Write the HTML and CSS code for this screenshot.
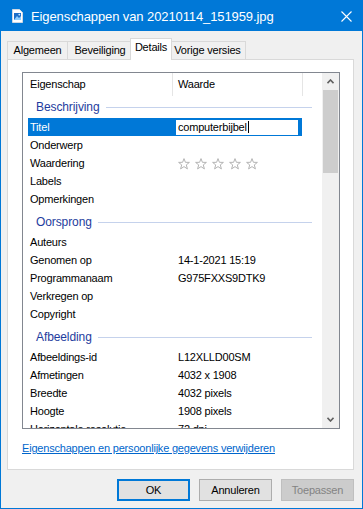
FILE: index.html
```html
<!DOCTYPE html>
<html lang="nl">
<head>
    <meta charset="UTF-8">
    <title>Eigenschappen van 20210114_151959.jpg</title>
    <link rel="stylesheet" href="styles.css">
</head>
<body>
<div class="window">
    <!-- Title bar -->
    <div class="titlebar">
        <svg class="app-icon" viewBox="0 0 11 14">
            <path d="M0.5 0.5 H7.5 L10.5 3.5 V13.5 H0.5 Z" fill="#fff" stroke="#cfd8e3"/>
            <rect x="2" y="4" width="7" height="7" fill="#1e6fc8"/>
            <path d="M2 11 L5 7 L7 9 L9 7 V11 Z" fill="#8fd0ff"/>
            <circle cx="7.3" cy="5.6" r="0.9" fill="#cfeaff"/>
        </svg>
        <span class="title">Eigenschappen van 20210114_151959.jpg</span>
        <svg class="close" viewBox="0 0 11 11">
            <path d="M0.5 0.5 L10.5 10.5 M10.5 0.5 L0.5 10.5" stroke="#fff" stroke-width="1.1"/>
        </svg>
    </div>

    <div class="client">
        <!-- Tabs -->
        <ul class="tabs">
            <li class="tab tab-general">Algemeen</li>
            <li class="tab tab-security">Beveiliging</li>
            <li class="tab tab-details active">Details</li>
            <li class="tab tab-versions">Vorige versies</li>
        </ul>

        <div class="panel">
            <div class="listview">
                <div class="list">
                    <div class="list-header">
                        <div class="col col-name">Eigenschap</div>
                        <div class="col col-value">Waarde</div>
                    </div>

                    <div class="group first"><span>Beschrijving</span><i class="rule"></i></div>
                    <div class="row selected">
                        <span class="name">Titel</span>
                        <span class="value"><span class="edit">computerbijbel<b class="caret"></b></span></span>
                    </div>
                    <div class="row"><span class="name">Onderwerp</span><span class="value"></span></div>
                    <div class="row">
                        <span class="name">Waardering</span>
                        <span class="value stars">
                            <svg viewBox="0 0 12 12"><polygon points="6,0.6 7.4,4.3 11.4,4.4 8.3,6.9 9.4,10.9 6,8.6 2.6,10.9 3.7,6.9 0.6,4.4 4.6,4.3"/></svg>
                            <svg viewBox="0 0 12 12"><polygon points="6,0.6 7.4,4.3 11.4,4.4 8.3,6.9 9.4,10.9 6,8.6 2.6,10.9 3.7,6.9 0.6,4.4 4.6,4.3"/></svg>
                            <svg viewBox="0 0 12 12"><polygon points="6,0.6 7.4,4.3 11.4,4.4 8.3,6.9 9.4,10.9 6,8.6 2.6,10.9 3.7,6.9 0.6,4.4 4.6,4.3"/></svg>
                            <svg viewBox="0 0 12 12"><polygon points="6,0.6 7.4,4.3 11.4,4.4 8.3,6.9 9.4,10.9 6,8.6 2.6,10.9 3.7,6.9 0.6,4.4 4.6,4.3"/></svg>
                            <svg viewBox="0 0 12 12"><polygon points="6,0.6 7.4,4.3 11.4,4.4 8.3,6.9 9.4,10.9 6,8.6 2.6,10.9 3.7,6.9 0.6,4.4 4.6,4.3"/></svg>
                        </span>
                    </div>
                    <div class="row"><span class="name">Labels</span><span class="value"></span></div>
                    <div class="row"><span class="name">Opmerkingen</span><span class="value"></span></div>

                    <div class="group"><span>Oorsprong</span><i class="rule"></i></div>
                    <div class="row"><span class="name">Auteurs</span><span class="value"></span></div>
                    <div class="row"><span class="name">Genomen op</span><span class="value">14-1-2021 15:19</span></div>
                    <div class="row"><span class="name">Programmanaam</span><span class="value">G975FXXS9DTK9</span></div>
                    <div class="row"><span class="name">Verkregen op</span><span class="value"></span></div>
                    <div class="row"><span class="name">Copyright</span><span class="value"></span></div>

                    <div class="group"><span>Afbeelding</span><i class="rule"></i></div>
                    <div class="row"><span class="name">Afbeeldings-id</span><span class="value">L12XLLD00SM</span></div>
                    <div class="row"><span class="name">Afmetingen</span><span class="value">4032 x 1908</span></div>
                    <div class="row"><span class="name">Breedte</span><span class="value">4032 pixels</span></div>
                    <div class="row"><span class="name">Hoogte</span><span class="value">1908 pixels</span></div>
                    <div class="row"><span class="name">Horizontale resolutie</span><span class="value">72 dpi</span></div>
                </div>

                <!-- Scrollbar -->
                <div class="scrollbar">
                    <div class="arrow">
                        <svg viewBox="0 0 7 5"><path d="M0.5 4.2 L3.5 1 L6.5 4.2" fill="none" stroke="#606060" stroke-width="1.6"/></svg>
                    </div>
                    <div class="thumb"></div>
                    <div class="track"></div>
                    <div class="arrow">
                        <svg viewBox="0 0 7 5"><path d="M0.5 0.8 L3.5 4 L6.5 0.8" fill="none" stroke="#606060" stroke-width="1.6"/></svg>
                    </div>
                </div>
            </div>

            <a href="#" class="remove-link">Eigenschappen en persoonlijke gegevens verwijderen</a>
        </div>

        <!-- Dialog buttons -->
        <div class="buttons">
            <button class="btn btn-default">OK</button>
            <button class="btn">Annuleren</button>
            <button class="btn" disabled>Toepassen</button>
        </div>
    </div>
</div>
</body>
</html>
```

FILE: styles.css
```css
* {
    box-sizing: border-box;
}

body {
    margin: 0;
    font-family: "Liberation Sans", Arial, sans-serif;
    font-size: 11px;
    letter-spacing: -0.2px;
    color: #000;
    background: #fff;
}

.window {
    width: 363px;
    height: 509px;
    border: 1px solid #0078d7;
    background: #f0f0f0;
    display: flex;
    flex-direction: column;
}

/* Title bar */
.titlebar {
    height: 30px;
    flex: none;
    background: #0078d7;
    color: #fff;
    display: flex;
    align-items: center;
    padding-left: 11px;
}

.app-icon {
    width: 11px;
    height: 14px;
    margin-right: 8px;
}

.title {
    flex: 1;
    font-size: 13px;
    letter-spacing: -0.1px;
}

.close {
    width: 11px;
    height: 11px;
    margin-right: 10px;
}

/* Client area */
.client {
    flex: 1;
    padding: 7px 8px 0 6px;
    display: flex;
    flex-direction: column;
}

.tabs {
    list-style: none;
    margin: 0;
    padding: 0;
    height: 21px;
    display: flex;
    align-items: flex-end;
    position: relative;
    z-index: 2;
}

.tab {
    height: 18px;
    line-height: 17px;
    text-align: center;
    border: 1px solid #d9d9d9;
    border-bottom: none;
    background: #f0f0f0;
    margin-right: -1px;
}

.tab-general { width: 61px; }
.tab-security { width: 66px; }
.tab-details { width: 42px; }
.tab-versions { width: 77px; }

.tab.active {
    height: 22px;
    line-height: 17px;
    margin: 0 -3px -1px -2px;
    background: #fff;
    position: relative;
    z-index: 1;
}

.panel {
    width: 347px;
    height: 411px;
    border: 1px solid #d9d9d9;
    background: #fff;
    padding: 12px 0 0 14px;
}

/* List view */
.listview {
    width: 318px;
    height: 357px;
    border: 1px solid #828790;
    display: flex;
    overflow: hidden;
}

.list {
    width: 299px;
    overflow: hidden;
}

.list-header {
    height: 23px;
    display: flex;
}

.col {
    line-height: 23px;
    border-right: 1px solid #e5e5e5;
}

.col-name {
    width: 150px;
    padding-left: 7px;
}

.col-value {
    width: 130px;
    padding-left: 5px;
}

.group {
    height: 22px;
    margin-top: 3px;
    padding-left: 13px;
    display: flex;
    align-items: center;
    color: #1e3c9e;
    font-size: 12px;
    letter-spacing: -0.1px;
}

.group.first {
    margin-top: 0;
}

.rule {
    flex: 1;
    height: 1px;
    margin: 0 10px 0 6px;
    background: #c5d2ec;
}

.row {
    height: 18px;
    width: 274px;
    margin-left: 5px;
    display: flex;
    align-items: center;
    white-space: nowrap;
}

.row .name {
    width: 150px;
    padding-left: 2px;
    overflow: hidden;
}

.row .value {
    flex: 1;
}

.row.selected {
    background: #0078d7;
    color: #fff;
}

.edit {
    display: flex;
    align-items: center;
    width: 122px;
    height: 15px;
    margin-left: -2px;
    padding-left: 2px;
    background: #fff;
    color: #000;
}

.caret {
    width: 1px;
    height: 12px;
    margin-left: 1px;
    background: #000;
}

.stars {
    display: flex;
    gap: 5px;
    padding-top: 1px;
}

.stars svg {
    width: 12px;
    height: 12px;
    fill: none;
    stroke: #b4b4b4;
    stroke-width: 1;
}

/* Scrollbar */
.scrollbar {
    width: 17px;
    background: #f0f0f0;
    display: flex;
    flex-direction: column;
}

.arrow {
    height: 17px;
    display: flex;
    align-items: center;
    justify-content: center;
}

.arrow svg {
    width: 7px;
    height: 5px;
}

.thumb {
    height: 83px;
    margin: 0 1px;
    background: #cdcdcd;
}

.track {
    flex: 1;
}

.remove-link {
    display: block;
    margin-top: 12px;
    margin-left: 0;
    line-height: 14px;
    color: #0066cc;
    text-decoration: underline;
}

/* Buttons */
.buttons {
    display: flex;
    justify-content: flex-end;
    gap: 9px;
    margin-top: 9px;
}

.btn {
    width: 73px;
    height: 22px;
    font-family: inherit;
    font-size: 11px;
    letter-spacing: -0.2px;
    background: #e1e1e1;
    border: 1px solid #adadad;
    color: #000;
    padding: 0;
}

.btn-default {
    border: 2px solid #0078d7;
}

.btn:disabled {
    background: #cccccc;
    border-color: #bfbfbf;
    color: #838383;
}
```
